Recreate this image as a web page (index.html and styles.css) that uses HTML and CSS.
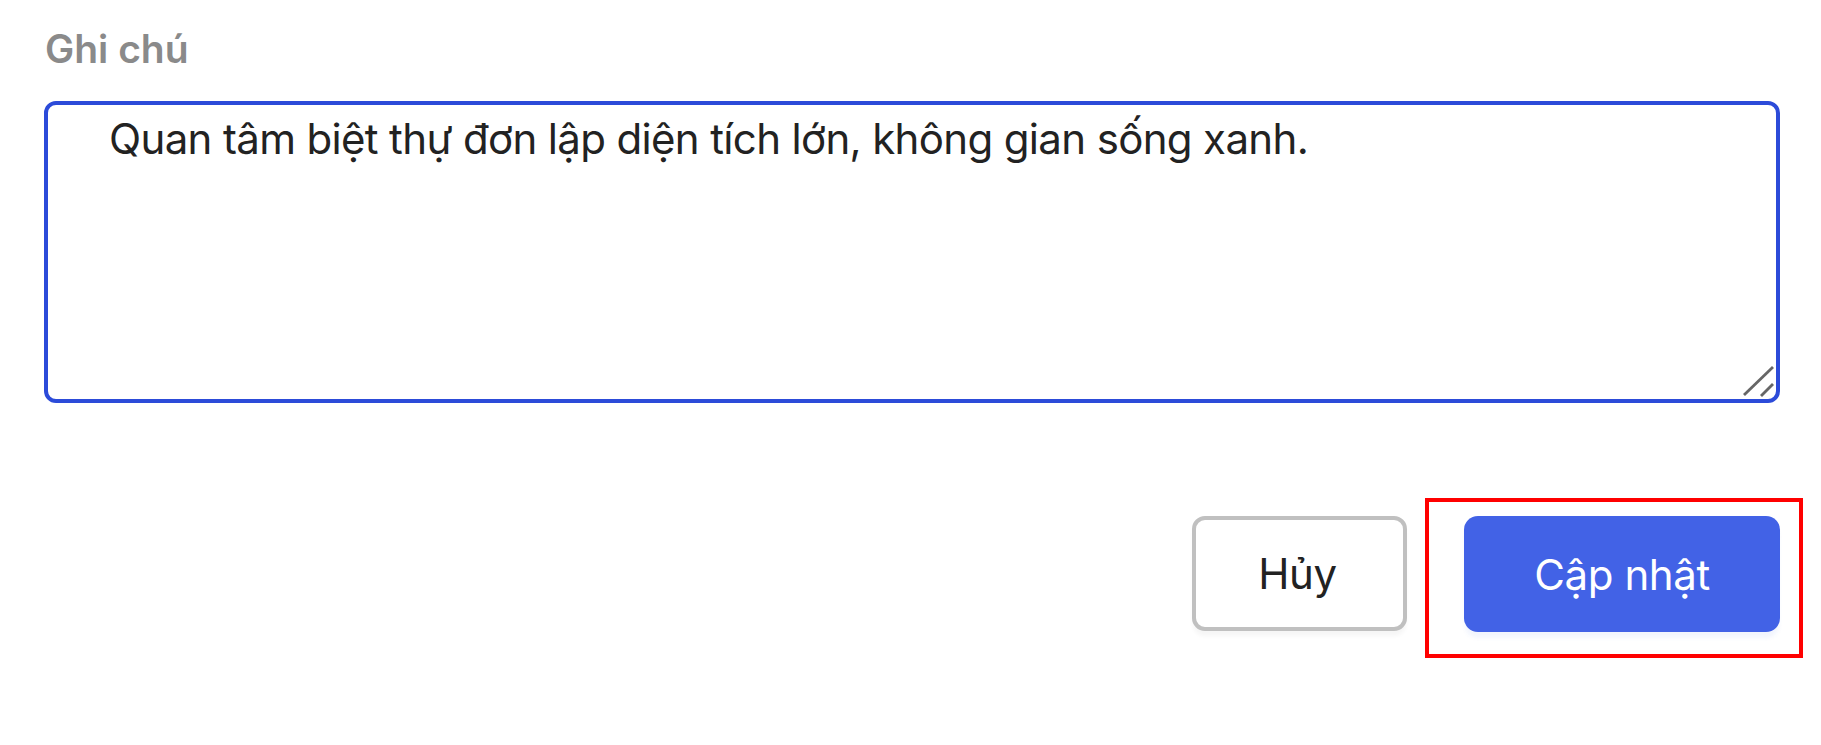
FILE: index.html
```html
<!DOCTYPE html>
<html lang="vi">
<head>
<meta charset="utf-8">
<title>Ghi chú</title>
<link rel="stylesheet" href="styles.css">
</head>
<body>
<form class="note-form">
  <label class="field-label" for="note">Ghi chú</label>
  <div class="textarea-wrap">
    <textarea id="note" class="note-input">Quan tâm biệt thự đơn lập diện tích lớn, không gian sống xanh.</textarea>
    <svg class="resize-handle" width="32" height="32" viewBox="0 0 32 32" aria-hidden="true">
      <line x1="2" y1="30" x2="31" y2="2" />
      <line x1="19" y1="31" x2="31" y2="19" />
    </svg>
  </div>
  <div class="actions">
    <button type="button" class="btn btn-cancel">Hủy</button>
    <div class="highlight-wrap">
      <button type="button" class="btn btn-primary">Cập nhật</button>
      <span class="highlight-box"></span>
    </div>
  </div>
</form>
</body>
</html>
```

FILE: styles.css
```css
html, body {
  margin: 0;
  padding: 0;
  background: #ffffff;
}

body {
  font-family: Inter, "Noto Sans", "Liberation Sans", sans-serif;
  color: #222222;
  min-height: 745px;
}

.note-form {
  display: flex;
  flex-direction: column;
  padding: 25px 41px 80px 44px;
}

.field-label {
  font-size: 39px;
  font-weight: 600;
  color: #8a8a8a;
  line-height: 1.21;
  padding-left: 1px;
}

.textarea-wrap {
  position: relative;
  margin-top: 29px;
  height: 302px;
}

.note-input {
  box-sizing: border-box;
  display: block;
  width: 100%;
  height: 100%;
  margin: 0;
  border: 4px solid #2c4bd9;
  border-radius: 12px;
  padding: 2px 20px 4px 61px;
  font-family: Inter, "Noto Sans", "Liberation Sans", sans-serif;
  font-size: 42px;
  letter-spacing: -0.65px;
  line-height: 1.5;
  color: #222222;
  background: #ffffff;
  resize: none;
  outline: none;
}

.resize-handle {
  position: absolute;
  right: 6px;
  bottom: 6px;
  stroke: #666666;
  stroke-width: 2.8;
  stroke-linecap: butt;
}

.actions {
  display: flex;
  justify-content: flex-end;
  align-items: flex-start;
  gap: 57px;
  margin-top: 113px;
}

.btn {
  box-sizing: border-box;
  height: 116px;
  margin: 0;
  font-family: Inter, "Noto Sans", "Liberation Sans", sans-serif;
  font-size: 42px;
  font-weight: 400;
  letter-spacing: -0.4px;
  cursor: pointer;
}

.btn-cancel {
  width: 215px;
  height: 115px;
  padding-left: 2px;
  background: #ffffff;
  color: #222222;
  border: 4px solid #c0c0c0;
  border-radius: 13px;
  box-shadow: 0 6px 4px -1px rgba(0, 0, 0, 0.04);
}

.highlight-wrap {
  position: relative;
}

.btn-primary {
  display: block;
  width: 316px;
  background: #4262e6;
  color: #ffffff;
  border: none;
  border-radius: 14px;
  box-shadow: 0 7px 4px -1px rgba(70, 110, 220, 0.07);
}

.highlight-box {
  position: absolute;
  left: -39px;
  top: -18px;
  right: -23px;
  bottom: -26px;
  border: 4px solid #ff0000;
  pointer-events: none;
}
```
